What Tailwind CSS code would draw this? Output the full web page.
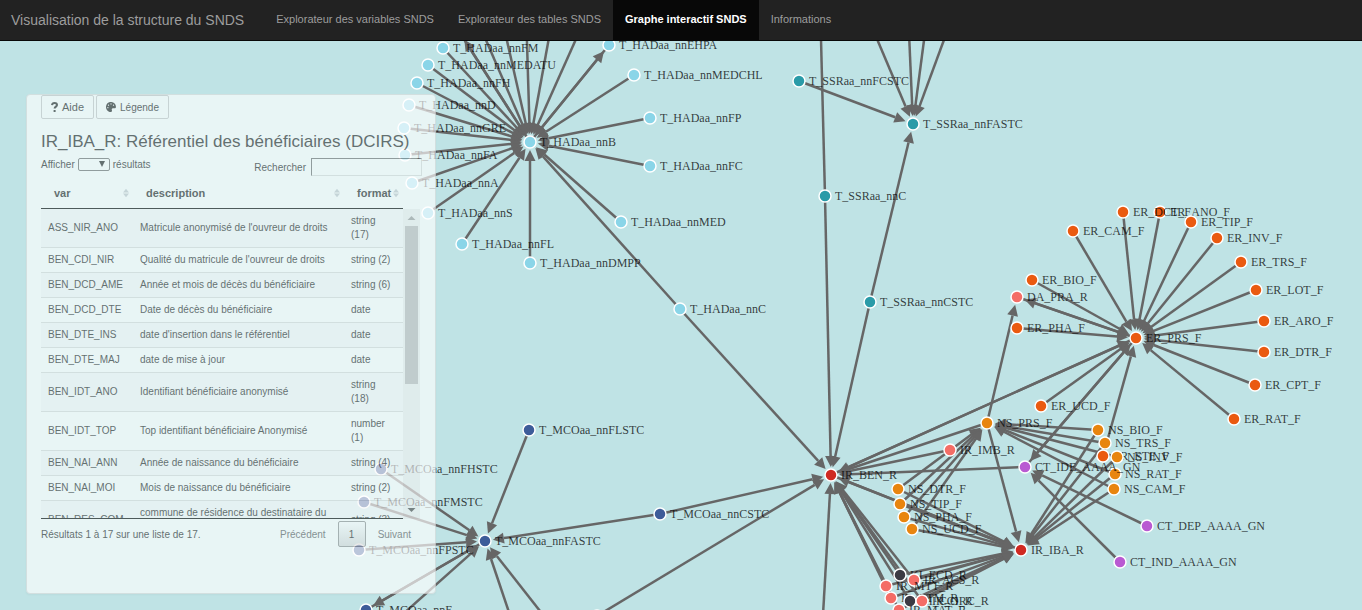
<!DOCTYPE html>
<html lang="fr">
  <head>
    <meta charset="UTF-8" />
    <meta name="viewport" content="width=device-width, initial-scale=1.0" />
    <title>Visualisation de la structure du SNDS</title>

    <!-- Tailwind CSS CDN -->
    <script src="https://cdn.jsdelivr.net/npm/@tailwindcss/browser@4"></script>
  </head>
  <body
    class="relative flex flex-col h-screen overflow-hidden bg-[#bfe3e5] font-['Liberation_Sans',Arial,sans-serif] text-[10px] text-[#333]"
  >
    <!-- Navbar -->
    <nav
      class="relative z-10 flex items-stretch shrink-0 h-[41px] bg-[#222] border-b border-[#080808] text-[11px] leading-4 text-[#9d9d9d]"
    >
      <a href="#" class="pl-[11px] pr-5 py-3 text-[14px]">Visualisation de la structure du SNDS</a>
      <a href="#" class="px-3 py-[11px]">Explorateur des variables SNDS</a>
      <a href="#" class="px-3 py-[11px]">Explorateur des tables SNDS</a>
      <a href="#" class="px-3 py-[11px] bg-[#080808] text-white font-bold">Graphe interactif SNDS</a>
      <a href="#" class="px-3 py-[11px]">Informations</a>
    </nav>

    <!-- Network -->
    <svg id="graph" class="absolute inset-0 w-full h-full font-['Liberation_Serif',serif] text-[12px]">
      <g id="links" stroke="#666" stroke-width="2.5" fill="#666"></g>
      <g id="nodes"></g>
    </svg>

    <!-- Panel -->
    <section
      class="absolute left-[26px] top-[94px] w-[410px] h-[500px] px-[14px] bg-white border border-[#ddd] rounded-sm shadow-xs opacity-65"
    >
      <div class="flex gap-[2px]">
        <button class="flex items-center gap-1 h-[24px] px-[9px] border border-[#ccc] rounded-xs text-[11px]">
          <svg class="w-[7px] h-[10px]" viewBox="0 0 7 10" fill="none" stroke="#333" stroke-width="2">
            <path d="M1 3.2C1.2 1.6 2.2 1 3.5 1 5 1 6 1.8 6 3 6 4.6 3.6 4.6 3.6 6.6M3.6 8v2" />
          </svg>
          Aide
        </button>
        <button class="flex items-center gap-1 h-[24px] px-[9px] border border-[#ccc] rounded-xs">
          <svg class="w-[10px] h-[10px]" viewBox="0 0 512 512" fill="#333">
            <path
              fill-rule="evenodd"
              d="M204 5C105 25 25 105 5 203c-37 187 131 326 255 307 40-7 60-54 41-90-22-44 9-95 59-95h79c40 0 72-33 72-72C511 95 370-29 204 5zM96 320a32 32 0 1 1 0-64 32 32 0 0 1 0 64zm32-128a32 32 0 1 1 0-64 32 32 0 0 1 0 64zm128-64a32 32 0 1 1 0-64 32 32 0 0 1 0 64zm128 64a32 32 0 1 1 0-64 32 32 0 0 1 0 64z"
            />
          </svg>
          Légende
        </button>
      </div>

      <h1 class="mt-[11px] text-[17px] leading-6 whitespace-nowrap">IR_IBA_R: Référentiel des bénéficiaires (DCIRS)</h1>

      <div class="flex justify-between items-start pt-1 pb-px">
        <div class="flex items-center gap-[3px] leading-3">
          <label for="length">Afficher</label>
          <div class="relative">
            <select id="length" class="block w-[32px] h-[13px] border border-[#777] rounded-xs appearance-none"></select>
            <svg class="absolute right-[5px] top-[3px] w-[6px] h-[6px] pointer-events-none" viewBox="0 0 6 6" fill="#333">
              <path d="M0 0h6L3 6z" />
            </svg>
          </div>
          <span>résultats</span>
        </div>
        <div class="flex items-center gap-[5px] -mr-px">
          <label for="search">Rechercher</label>
          <input id="search" type="search" class="w-[111px] h-[18px] border border-[#ddd] border-t-[#777] border-l-[#777]" />
        </div>
      </div>

      <div class="flex h-[342px] pr-px">
        <div class="grow overflow-hidden border-b border-[#111]">
          <table class="w-full table-fixed border-separate border-spacing-0 leading-[14px]">
            <thead>
              <tr id="heads" class="text-left align-middle text-[11px]"></tr>
            </thead>
            <tbody id="rows"></tbody>
          </table>
        </div>
        <!-- Scrollbar -->
        <div class="flex flex-col items-center w-[17px] mt-[32px] bg-[#f1f1f1]" aria-hidden="true">
          <svg class="w-[17px] h-[17px] shrink-0" viewBox="0 0 17 17" fill="#a3a3a3"><path d="M4.5 11h8L8.5 7z" /></svg>
          <div class="w-[13px] h-[158px] bg-[#c1c1c1]"></div>
          <svg class="w-[17px] h-[17px] shrink-0 mt-auto" viewBox="0 0 17 17" fill="#505050"><path d="M4.5 6h8L8.5 10z" /></svg>
        </div>
      </div>

      <div class="flex items-center justify-between pt-[2px]">
        <p>Résultats 1 à 17 sur une liste de 17.</p>
        <div class="flex items-center gap-3">
          <button class="text-[#666]">Précédent</button>
          <button class="w-[28px] h-[26px] border border-[#979797] rounded-xs bg-linear-to-b from-white to-[#dcdcdc]">1</button>
          <button class="pr-[10px] text-[#666]">Suivant</button>
        </div>
      </div>
    </section>

    <script type="text/javascript">
      const columns = [
        { name: "var", width: "w-[92px]" },
        { name: "description", width: "w-[211px]" },
        { name: "format", width: "" },
      ];

      const variables = [
        ["ASS_NIR_ANO", "Matricule anonymisé de l'ouvreur de droits", "string (17)"],
        ["BEN_CDI_NIR", "Qualité du matricule de l'ouvreur de droits", "string (2)"],
        ["BEN_DCD_AME", "Année et mois de décès du bénéficiaire", "string (6)"],
        ["BEN_DCD_DTE", "Date de décès du bénéficiaire", "date"],
        ["BEN_DTE_INS", "date d'insertion dans le référentiel", "date"],
        ["BEN_DTE_MAJ", "date de mise à jour", "date"],
        ["BEN_IDT_ANO", "Identifiant bénéficiaire anonymisé", "string (18)"],
        ["BEN_IDT_TOP", "Top identifiant bénéficiaire Anonymisé", "number (1)"],
        ["BEN_NAI_ANN", "Année de naissance du bénéficiaire", "string (4)"],
        ["BEN_NAI_MOI", "Mois de naissance du bénéficiaire", "string (2)"],
        ["BEN_RES_COM", "commune de résidence du destinataire du bénéficiaire", "string (3)"],
      ];

      document.getElementById("heads").innerHTML = columns
        .map(
          (col) => `
          <th class="${col.width} h-[32px] border-b border-[#111] pl-[13px] pr-[4px] font-bold">
            <div class="flex items-center justify-between">
              ${col.name}
              <svg class="w-[6px] h-[10px]" viewBox="0 0 7 10" fill="#c9cfd2"><path d="M0 4.5h7L3.5 0zM0 5.5h7L3.5 10z"/></svg>
            </div>
          </th>`
        )
        .join("");

      document.getElementById("rows").innerHTML = variables
        .map(
          (row) => `
          <tr class="odd:bg-[#f9f9f9]">
            ${row
              .map((cell) => `<td class="pl-[7px] pr-[10px] py-[5px] border-b border-[#ddd]">${cell}</td>`)
              .join("")}
          </tr>`
        )
        .join("");

      const colors = {
        had: "#8ad5e8",
        ssr: "#2a9ba8",
        mco: "#3d5c99",
        er: "#ea5a10",
        ns: "#e8850f",
        ir: "#f46d66",
        ben: "#cf2a22",
        ct: "#b95ad2",
        ki: "#3b3b44",
      };

      // name, x, y, group
      const nodes = [
        ["T_HADaa_nnFM", 443, 48, "had"],
        ["T_HADaa_nnMEDATU", 428, 65, "had"],
        ["T_HADaa_nnFH", 417, 83, "had"],
        ["T_HADaa_nnD", 409, 105, "had"],
        ["T_HADaa_nnGRE", 404, 128, "had"],
        ["T_HADaa_nnFA", 405, 155, "had"],
        ["T_HADaa_nnA", 412, 183, "had"],
        ["T_HADaa_nnS", 428, 213, "had"],
        ["T_HADaa_nnFL", 462, 244, "had"],
        ["T_HADaa_nnDMPP", 530, 263, "had"],
        ["T_HADaa_nnC", 680, 309, "had"],
        ["T_HADaa_nnMED", 621, 222, "had"],
        ["T_HADaa_nnFC", 650, 166, "had"],
        ["T_HADaa_nnFP", 650, 118, "had"],
        ["T_HADaa_nnMEDCHL", 634, 75, "had"],
        ["T_HADaa_nnEHPA", 609, 45, "had"],
        ["T_HADaa_nnE", 460, 33, "had"],
        ["T_HADaa_nnB", 530, 142, "had"],
        ["T_SSRaa_nnB", 803, 34, "ssr"],
        ["T_SSRaa_nnFCSTC", 799, 81, "ssr"],
        ["T_SSRaa_nnFASTC", 913, 124, "ssr"],
        ["T_SSRaa_nnC", 825, 196, "ssr"],
        ["T_SSRaa_nnCSTC", 870, 302, "ssr"],
        ["T_MCOaa_nnFLSTC", 529, 430, "mco"],
        ["T_MCOaa_nnFHSTC", 381, 469, "mco"],
        ["T_MCOaa_nnFMSTC", 364, 502, "mco"],
        ["T_MCOaa_nnFPSTC", 359, 550, "mco"],
        ["T_MCOaa_nnCSTC", 660, 514, "mco"],
        ["T_MCOaa_nnFASTC", 485, 541, "mco"],
        ["T_MCOaa_nnE", 366, 610, "mco"],
        ["T_MCOaa_nnC", 597, 616, "mco"],
        ["ER_ANO_F", 1160, 212, "er"],
        ["ER_DCT_F", 1123, 212, "er"],
        ["ER_TIP_F", 1191, 222, "er"],
        ["ER_INV_F", 1217, 238, "er"],
        ["ER_TRS_F", 1241, 262, "er"],
        ["ER_LOT_F", 1256, 290, "er"],
        ["ER_ARO_F", 1264, 321, "er"],
        ["ER_DTR_F", 1264, 352, "er"],
        ["ER_CPT_F", 1255, 385, "er"],
        ["ER_RAT_F", 1234, 419, "er"],
        ["ER_UCD_F", 1041, 406, "er"],
        ["ER_PHA_F", 1017, 328, "er"],
        ["ER_BIO_F", 1032, 280, "er"],
        ["ER_CAM_F", 1073, 231, "er"],
        ["ER_PRS_F", 1136, 338, "er"],
        ["ER_ETE_F", 1103, 456, "er"],
        ["DA_PRA_R", 1017, 297, "ir"],
        ["NS_PRS_F", 987, 423, "ns"],
        ["NS_BIO_F", 1098, 430, "ns"],
        ["NS_TRS_F", 1105, 443, "ns"],
        ["NS_INV_F", 1117, 457, "ns"],
        ["NS_RAT_F", 1115, 474, "ns"],
        ["NS_CAM_F", 1114, 489, "ns"],
        ["NS_DTR_F", 898, 489, "ns"],
        ["NS_TIP_F", 900, 504, "ns"],
        ["NS_PHA_F", 904, 517, "ns"],
        ["NS_UCD_F", 912, 529, "ns"],
        ["IR_IMB_R", 950, 450, "ir"],
        ["IR_BEN_R", 831, 475, "ben"],
        ["IR_IBA_R", 1021, 550, "ben"],
        ["CT_IDE_AAAA_GN", 1025, 467, "ct"],
        ["CT_DEP_AAAA_GN", 1147, 526, "ct"],
        ["CT_IND_AAAA_GN", 1120, 562, "ct"],
        ["KI_ECD_R", 900, 575, "ki"],
        ["IR_ACS_R", 914, 580, "ir"],
        ["IR_MTT_R", 886, 586, "ir"],
        ["IR_ETM_R", 891, 598, "ir"],
        ["KI_CCI_R", 910, 601, "ki"],
        ["IR_ORC_R", 922, 601, "ir"],
        ["IR_MAT_R", 899, 610, "ir"],
      ];

      // source, target; a point stands for a node outside the view
      const links = [
        ["T_HADaa_nnFM", "T_HADaa_nnB"],
        ["T_HADaa_nnMEDATU", "T_HADaa_nnB"],
        ["T_HADaa_nnFH", "T_HADaa_nnB"],
        ["T_HADaa_nnD", "T_HADaa_nnB"],
        ["T_HADaa_nnGRE", "T_HADaa_nnB"],
        ["T_HADaa_nnFA", "T_HADaa_nnB"],
        ["T_HADaa_nnA", "T_HADaa_nnB"],
        ["T_HADaa_nnS", "T_HADaa_nnB"],
        ["T_HADaa_nnFL", "T_HADaa_nnB"],
        ["T_HADaa_nnDMPP", "T_HADaa_nnB"],
        ["T_HADaa_nnC", "T_HADaa_nnB"],
        ["T_HADaa_nnMED", "T_HADaa_nnB"],
        ["T_HADaa_nnFC", "T_HADaa_nnB"],
        ["T_HADaa_nnFP", "T_HADaa_nnB"],
        ["T_HADaa_nnMEDCHL", "T_HADaa_nnB"],
        ["T_HADaa_nnEHPA", "T_HADaa_nnB"],
        ["T_HADaa_nnB", "T_HADaa_nnEHPA"],
        ["T_HADaa_nnE", "T_HADaa_nnB"],
        ["T_HADaa_nnB", "T_HADaa_nnE"],
        [[473, 10], "T_HADaa_nnB"],
        [[500, 10], "T_HADaa_nnB"],
        [[526, 10], "T_HADaa_nnB"],
        [[554, 10], "T_HADaa_nnB"],
        [[589, 10], "T_HADaa_nnB"],
        ["T_HADaa_nnC", "IR_BEN_R"],
        ["T_SSRaa_nnFCSTC", "T_SSRaa_nnFASTC"],
        ["T_SSRaa_nnCSTC", "T_SSRaa_nnFASTC"],
        [[866, 13], "T_SSRaa_nnFASTC"],
        [[908, 10], "T_SSRaa_nnFASTC"],
        [[928, 10], "T_SSRaa_nnFASTC"],
        [[955, 10], "T_SSRaa_nnFASTC"],
        ["T_SSRaa_nnC", [820, 0]],
        ["T_SSRaa_nnC", "IR_BEN_R"],
        ["T_SSRaa_nnCSTC", "IR_BEN_R"],
        ["T_MCOaa_nnFLSTC", "T_MCOaa_nnFASTC"],
        ["T_MCOaa_nnFHSTC", "T_MCOaa_nnFASTC"],
        ["T_MCOaa_nnFMSTC", "T_MCOaa_nnFASTC"],
        ["T_MCOaa_nnFPSTC", "T_MCOaa_nnFASTC"],
        ["T_MCOaa_nnCSTC", "T_MCOaa_nnFASTC"],
        ["T_MCOaa_nnCSTC", "IR_BEN_R"],
        ["T_MCOaa_nnE", "T_MCOaa_nnFASTC"],
        ["T_MCOaa_nnFASTC", "T_MCOaa_nnE"],
        [[375, 639], "T_MCOaa_nnFASTC"],
        [[518, 639], "T_MCOaa_nnFASTC"],
        [[562, 639], "T_MCOaa_nnFASTC"],
        ["T_MCOaa_nnC", "IR_BEN_R"],
        [[821, 650], "IR_BEN_R"],
        ["ER_DCT_F", "ER_PRS_F"],
        ["ER_ANO_F", "ER_PRS_F"],
        ["ER_TIP_F", "ER_PRS_F"],
        ["ER_INV_F", "ER_PRS_F"],
        ["ER_TRS_F", "ER_PRS_F"],
        ["ER_LOT_F", "ER_PRS_F"],
        ["ER_ARO_F", "ER_PRS_F"],
        ["ER_DTR_F", "ER_PRS_F"],
        ["ER_CPT_F", "ER_PRS_F"],
        ["ER_RAT_F", "ER_PRS_F"],
        ["ER_UCD_F", "ER_PRS_F"],
        ["ER_PHA_F", "ER_PRS_F"],
        ["ER_BIO_F", "ER_PRS_F"],
        ["ER_CAM_F", "ER_PRS_F"],
        ["ER_ETE_F", "ER_PRS_F"],
        ["ER_PRS_F", "DA_PRA_R"],
        ["DA_PRA_R", "ER_PRS_F"],
        ["ER_PRS_F", "IR_BEN_R"],
        ["IR_BEN_R", "ER_PRS_F"],
        ["ER_PRS_F", "CT_IDE_AAAA_GN"],
        ["CT_IDE_AAAA_GN", "ER_PRS_F"],
        ["NS_PRS_F", "DA_PRA_R"],
        ["NS_PRS_F", "IR_BEN_R"],
        ["NS_PRS_F", "IR_IBA_R"],
        ["NS_BIO_F", "NS_PRS_F"],
        ["NS_TRS_F", "NS_PRS_F"],
        ["NS_INV_F", "NS_PRS_F"],
        ["NS_RAT_F", "NS_PRS_F"],
        ["NS_CAM_F", "NS_PRS_F"],
        ["NS_DTR_F", "NS_PRS_F"],
        ["NS_TIP_F", "NS_PRS_F"],
        ["NS_PHA_F", "NS_PRS_F"],
        ["NS_UCD_F", "NS_PRS_F"],
        ["NS_BIO_F", "IR_IBA_R"],
        ["NS_TRS_F", "IR_IBA_R"],
        ["NS_INV_F", "IR_IBA_R"],
        ["NS_RAT_F", "IR_IBA_R"],
        ["NS_CAM_F", "IR_IBA_R"],
        ["NS_DTR_F", "IR_IBA_R"],
        ["NS_TIP_F", "IR_IBA_R"],
        ["NS_PHA_F", "IR_IBA_R"],
        ["NS_UCD_F", "IR_IBA_R"],
        ["IR_IMB_R", "IR_BEN_R"],
        ["IR_IBA_R", "IR_BEN_R"],
        ["IR_BEN_R", "IR_IBA_R"],
        ["CT_IDE_AAAA_GN", "IR_BEN_R"],
        ["CT_DEP_AAAA_GN", "CT_IDE_AAAA_GN"],
        ["CT_IND_AAAA_GN", "CT_IDE_AAAA_GN"],
        ["KI_ECD_R", "IR_BEN_R"],
        ["IR_ACS_R", "IR_BEN_R"],
        ["IR_MTT_R", "IR_BEN_R"],
        ["IR_ETM_R", "IR_BEN_R"],
        ["KI_CCI_R", "IR_BEN_R"],
        ["IR_ORC_R", "IR_BEN_R"],
        ["IR_MAT_R", "IR_BEN_R"],
        ["KI_ECD_R", "IR_IBA_R"],
        ["IR_ACS_R", "IR_IBA_R"],
        ["IR_MTT_R", "IR_IBA_R"],
        ["IR_ETM_R", "IR_IBA_R"],
        ["KI_CCI_R", "IR_IBA_R"],
        ["IR_ORC_R", "IR_IBA_R"],
        ["IR_MAT_R", "IR_IBA_R"],
      ];

      const positions = {};
      nodes.forEach(([name, x, y]) => (positions[name] = [x, y]));

      function getpoint(end) {
        return Array.isArray(end) ? end : positions[end];
      }

      function drawlink([source, target]) {
        const [x1, y1] = getpoint(source);
        const [x2, y2] = getpoint(target);
        const length = Math.hypot(x2 - x1, y2 - y1);
        const angle = (Math.atan2(y2 - y1, x2 - x1) * 180) / Math.PI;
        const base = length - 19;

        return `<g transform="translate(${x1} ${y1}) rotate(${angle})">
          <line x1="0" y1="0" x2="${base}" y2="0" />
          <path stroke="none" d="M${base} -5.5L${base + 11} 0L${base} 5.5z" />
        </g>`;
      }

      document.getElementById("links").innerHTML = links.map(drawlink).join("");

      document.getElementById("nodes").innerHTML = nodes
        .map(
          ([name, x, y, group]) => `
          <g transform="translate(${x} ${y})">
            <circle r="6" fill="${colors[group]}" stroke="#fff" stroke-width="1.5" />
            <text x="10" y="4" fill="#000" fill-opacity="0.75">${name}</text>
          </g>`
        )
        .join("");
    </script>
  </body>
</html>
